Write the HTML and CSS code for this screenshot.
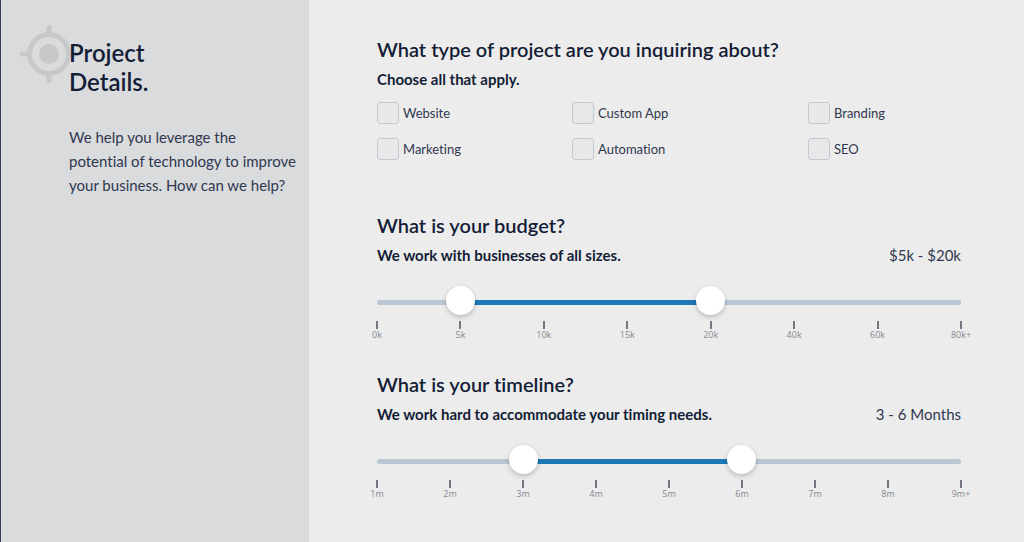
FILE: index.html
```html
<!DOCTYPE html>
<html lang="en">
<head>
<meta charset="utf-8">
<meta name="viewport" content="width=device-width, initial-scale=1">
<title>Project Details</title>
<link rel="stylesheet" href="styles.css">
</head>
<body>
<div class="page">
  <aside class="sidebar">
    <svg class="target" viewBox="0 0 58 58" aria-hidden="true">
      <circle cx="29" cy="29" r="10"/>
      <circle class="target-line" cx="29" cy="29" r="19.5"/>
      <path class="target-line" d="M29 2.5V9M29 49v6.500M2.500 29H9M49 29h6.500"/>
    </svg>
    <h1 class="title">Project<br>Details.</h1>
    <p class="intro">We help you leverage the potential of technology to improve your business. How can we help?</p>
  </aside>
  <form class="details">
    <section class="question">
      <h2 class="heading" id="type">What type of project are you inquiring about?</h2>
      <p class="hint">Choose all that apply.</p>
      <div class="options" role="group" aria-labelledby="type">
        <label class="option"><input class="box" type="checkbox">Website</label>
        <label class="option"><input class="box" type="checkbox">Custom App</label>
        <label class="option"><input class="box" type="checkbox">Branding</label>
        <label class="option"><input class="box" type="checkbox">Marketing</label>
        <label class="option"><input class="box" type="checkbox">Automation</label>
        <label class="option"><input class="box" type="checkbox">SEO</label>
      </div>
    </section>
    <section class="question">
      <h2 class="heading">What is your budget?</h2>
      <div class="summary">
        <p class="hint">We work with businesses of all sizes.</p>
        <output class="value">$5k - $20k</output>
      </div>
      <div class="slider budget">
        <div class="track"><div class="fill"></div></div>
        <input class="range" type="range" min="0" max="7" value="1" aria-label="Minimum budget">
        <input class="range" type="range" min="0" max="7" value="4" aria-label="Maximum budget">
      </div>
      <ul class="ticks budget">
        <li>0k</li><li>5k</li><li>10k</li><li>15k</li><li>20k</li><li>40k</li><li>60k</li><li>80k+</li>
      </ul>
    </section>
    <section class="question">
      <h2 class="heading">What is your timeline?</h2>
      <div class="summary">
        <p class="hint">We work hard to accommodate your timing needs.</p>
        <output class="value">3 - 6 Months</output>
      </div>
      <div class="slider timeline">
        <div class="track"><div class="fill"></div></div>
        <input class="range" type="range" min="1" max="9" value="3" aria-label="Shortest timeline">
        <input class="range" type="range" min="1" max="9" value="6" aria-label="Longest timeline">
      </div>
      <ul class="ticks timeline">
        <li>1m</li><li>2m</li><li>3m</li><li>4m</li><li>5m</li><li>6m</li><li>7m</li><li>8m</li><li>9m+</li>
      </ul>
    </section>
  </form>
</div>
</body>
</html>
```
FILE: styles.css
```css
* { box-sizing: border-box; }

body {
  margin: 0;
  background: #ececec;
  color: #141d36;
  font-family: Lato, "Liberation Sans", sans-serif;
  font-variant-ligatures: none;
}

h1, h2, p, ul { margin: 0; padding: 0; }

.page {
  display: grid;
  grid-template-columns: 309fr 715fr;
  min-height: 100vh;
}

.sidebar {
  position: relative;
  padding: 38px 13px 40px 68px;
  border-left: 1px solid #303c50;
  background: #d9dbdd;
}

.target {
  position: absolute;
  top: 25px;
  left: 19px;
  width: 58px;
  fill: #c6c8ca;
}

.target-line {
  fill: none;
  stroke: #c6c8ca;
  stroke-width: 5;
  stroke-linecap: round;
}

.title {
  position: relative;
  font-size: 24px;
  font-weight: 600;
  line-height: 29px;
}

.intro {
  margin-top: 29px;
  color: #303850;
  font-size: 15px;
  line-height: 24px;
}

.details {
  padding: 37px 63px 38px 68px;
}

.question + .question { margin-top: 53px; }
.question + .question + .question { margin-top: 32px; }

.heading {
  font-size: 20px;
  font-weight: 600;
  line-height: 24px;
}

.hint {
  font-size: 15px;
  font-weight: 700;
  line-height: 20px;
}

.heading + .hint, .summary { margin-top: 8px; }

.options {
  display: grid;
  grid-template-columns: 195fr 236fr 153fr;
  row-gap: 14px;
  margin-top: 13px;
}

.option {
  display: flex;
  align-items: center;
  gap: 4px;
  color: #303850;
  font-size: 13px;
  line-height: 22px;
}

.box {
  appearance: none;
  width: 22px;
  height: 22px;
  margin: 0;
  border: 1px solid #c3cad6;
  border-radius: 3px;
  background: #e8e8e8;
}

.box:checked { background: #1d78b8; }

.summary {
  display: flex;
  justify-content: space-between;
  align-items: baseline;
}

.value {
  color: #303850;
  font-size: 15px;
  line-height: 20px;
}

.slider {
  position: relative;
  margin-top: 35px;
}

.track {
  height: 5px;
  border-radius: 3px;
  background: #b9c6d3;
}

.fill {
  height: 5px;
  background: #1d78b8;
}

.budget .fill { margin: 0 42.86% 0 14.29%; }
.timeline .fill { margin: 0 37.5% 0 25%; }

.range {
  position: absolute;
  top: -14px;
  left: -14px;
  appearance: none;
  width: calc(100% + 28px);
  height: 29px;
  margin: 0;
  background: none;
  pointer-events: none;
}

.range::-webkit-slider-thumb {
  appearance: none;
  width: 29px;
  height: 29px;
  border-radius: 50%;
  background: #fff;
  box-shadow: 0 2px 5px rgba(0, 0, 0, .22);
  pointer-events: auto;
}

.ticks {
  display: flex;
  margin-top: 16px;
  list-style: none;
  color: #858991;
  font-family: "Open Sans", sans-serif;
  font-size: 9px;
  line-height: 11px;
  text-align: center;
}

.ticks li { flex: 1; }

.ticks li::before {
  content: "";
  display: block;
  width: 2px;
  height: 8px;
  margin: 0 auto;
  background: #74777f;
}

.ticks.budget { margin-inline: calc(-50% / 7); }
.ticks.timeline { margin-inline: calc(-50% / 8); }
```
